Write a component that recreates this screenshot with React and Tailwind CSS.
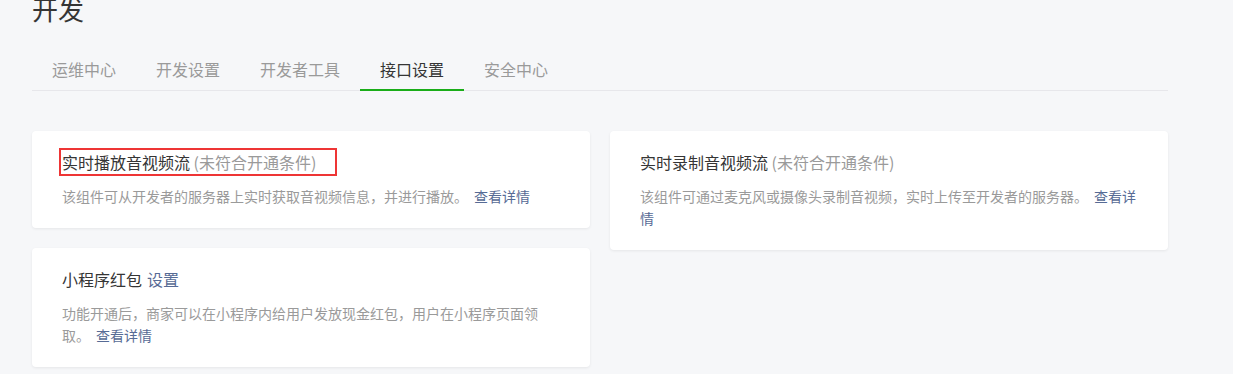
const tabs = ['运维中心', '开发设置', '开发者工具', '接口设置', '安全中心']

function Card({ title, children, highlight }) {
  return (
    <div className="relative bg-white rounded-[4px] shadow-[0_1px_3px_rgba(0,0,0,0.07)] px-[30px] pt-[19px] pb-[21px]">
      {highlight && (
        <div className="absolute left-[27px] top-[17px] w-[278px] h-[28px] border-2 border-[#ee3535]" />
      )}
      <div className="text-[16px] leading-[24px] text-[#353535]">{title}</div>
      <p className="mt-[11px] text-[14px] leading-[22px] text-[#9a9a9a]">{children}</p>
    </div>
  )
}

function More({ children = '查看详情' }) {
  return <a className="ml-[6px] text-[#576b95] cursor-pointer">{children}</a>
}

export default function App() {
  return (
    <div
      className="min-h-[374px] bg-[#f6f7f9] pl-8 overflow-hidden"
      style={{ fontFamily: '"Noto Sans CJK SC", "Noto Sans", sans-serif' }}
    >
      <div className="w-[1136px]">
        <h1 className="mt-[-4px] text-[26px] leading-[26px] font-normal text-[#353535]">开发</h1>

        <nav className="mt-[35px] flex border-b border-[#e7e7eb]">
          {tabs.map((t, i) => (
            <div
              key={t}
              className={
                i === 3
                  ? 'px-5 pb-[8px] text-[16px] leading-[24px] text-[#353535] border-b-2 border-[#1aad19] mb-[-1px]'
                  : 'px-5 pb-[8px] text-[16px] leading-[24px] text-[#9a9a9a] border-b-2 border-transparent mb-[-1px]'
              }
            >
              {t}
            </div>
          ))}
        </nav>

        <div className="mt-10 grid grid-cols-2 gap-5 items-start">
          <div className="flex flex-col gap-5">
            <Card
              highlight
              title={
                <>
                  实时播放音视频流 <span className="text-[#9a9a9a]">(未符合开通条件)</span>
                </>
              }
            >
              该组件可从开发者的服务器上实时获取音视频信息，并进行播放。<More />
            </Card>
            <Card
              title={
                <>
                  小程序红包<a className="ml-[5px] text-[#576b95] cursor-pointer">设置</a>
                </>
              }
            >
              功能开通后，商家可以在小程序内给用户发放现金红包，用户在小程序页面领取。<More />
            </Card>
          </div>
          <div className="flex flex-col gap-5">
            <Card
              title={
                <>
                  实时录制音视频流 <span className="text-[#9a9a9a]">(未符合开通条件)</span>
                </>
              }
            >
              该组件可通过麦克风或摄像头录制音视频，实时上传至开发者的服务器。<More />
            </Card>
          </div>
        </div>
      </div>
    </div>
  )
}
